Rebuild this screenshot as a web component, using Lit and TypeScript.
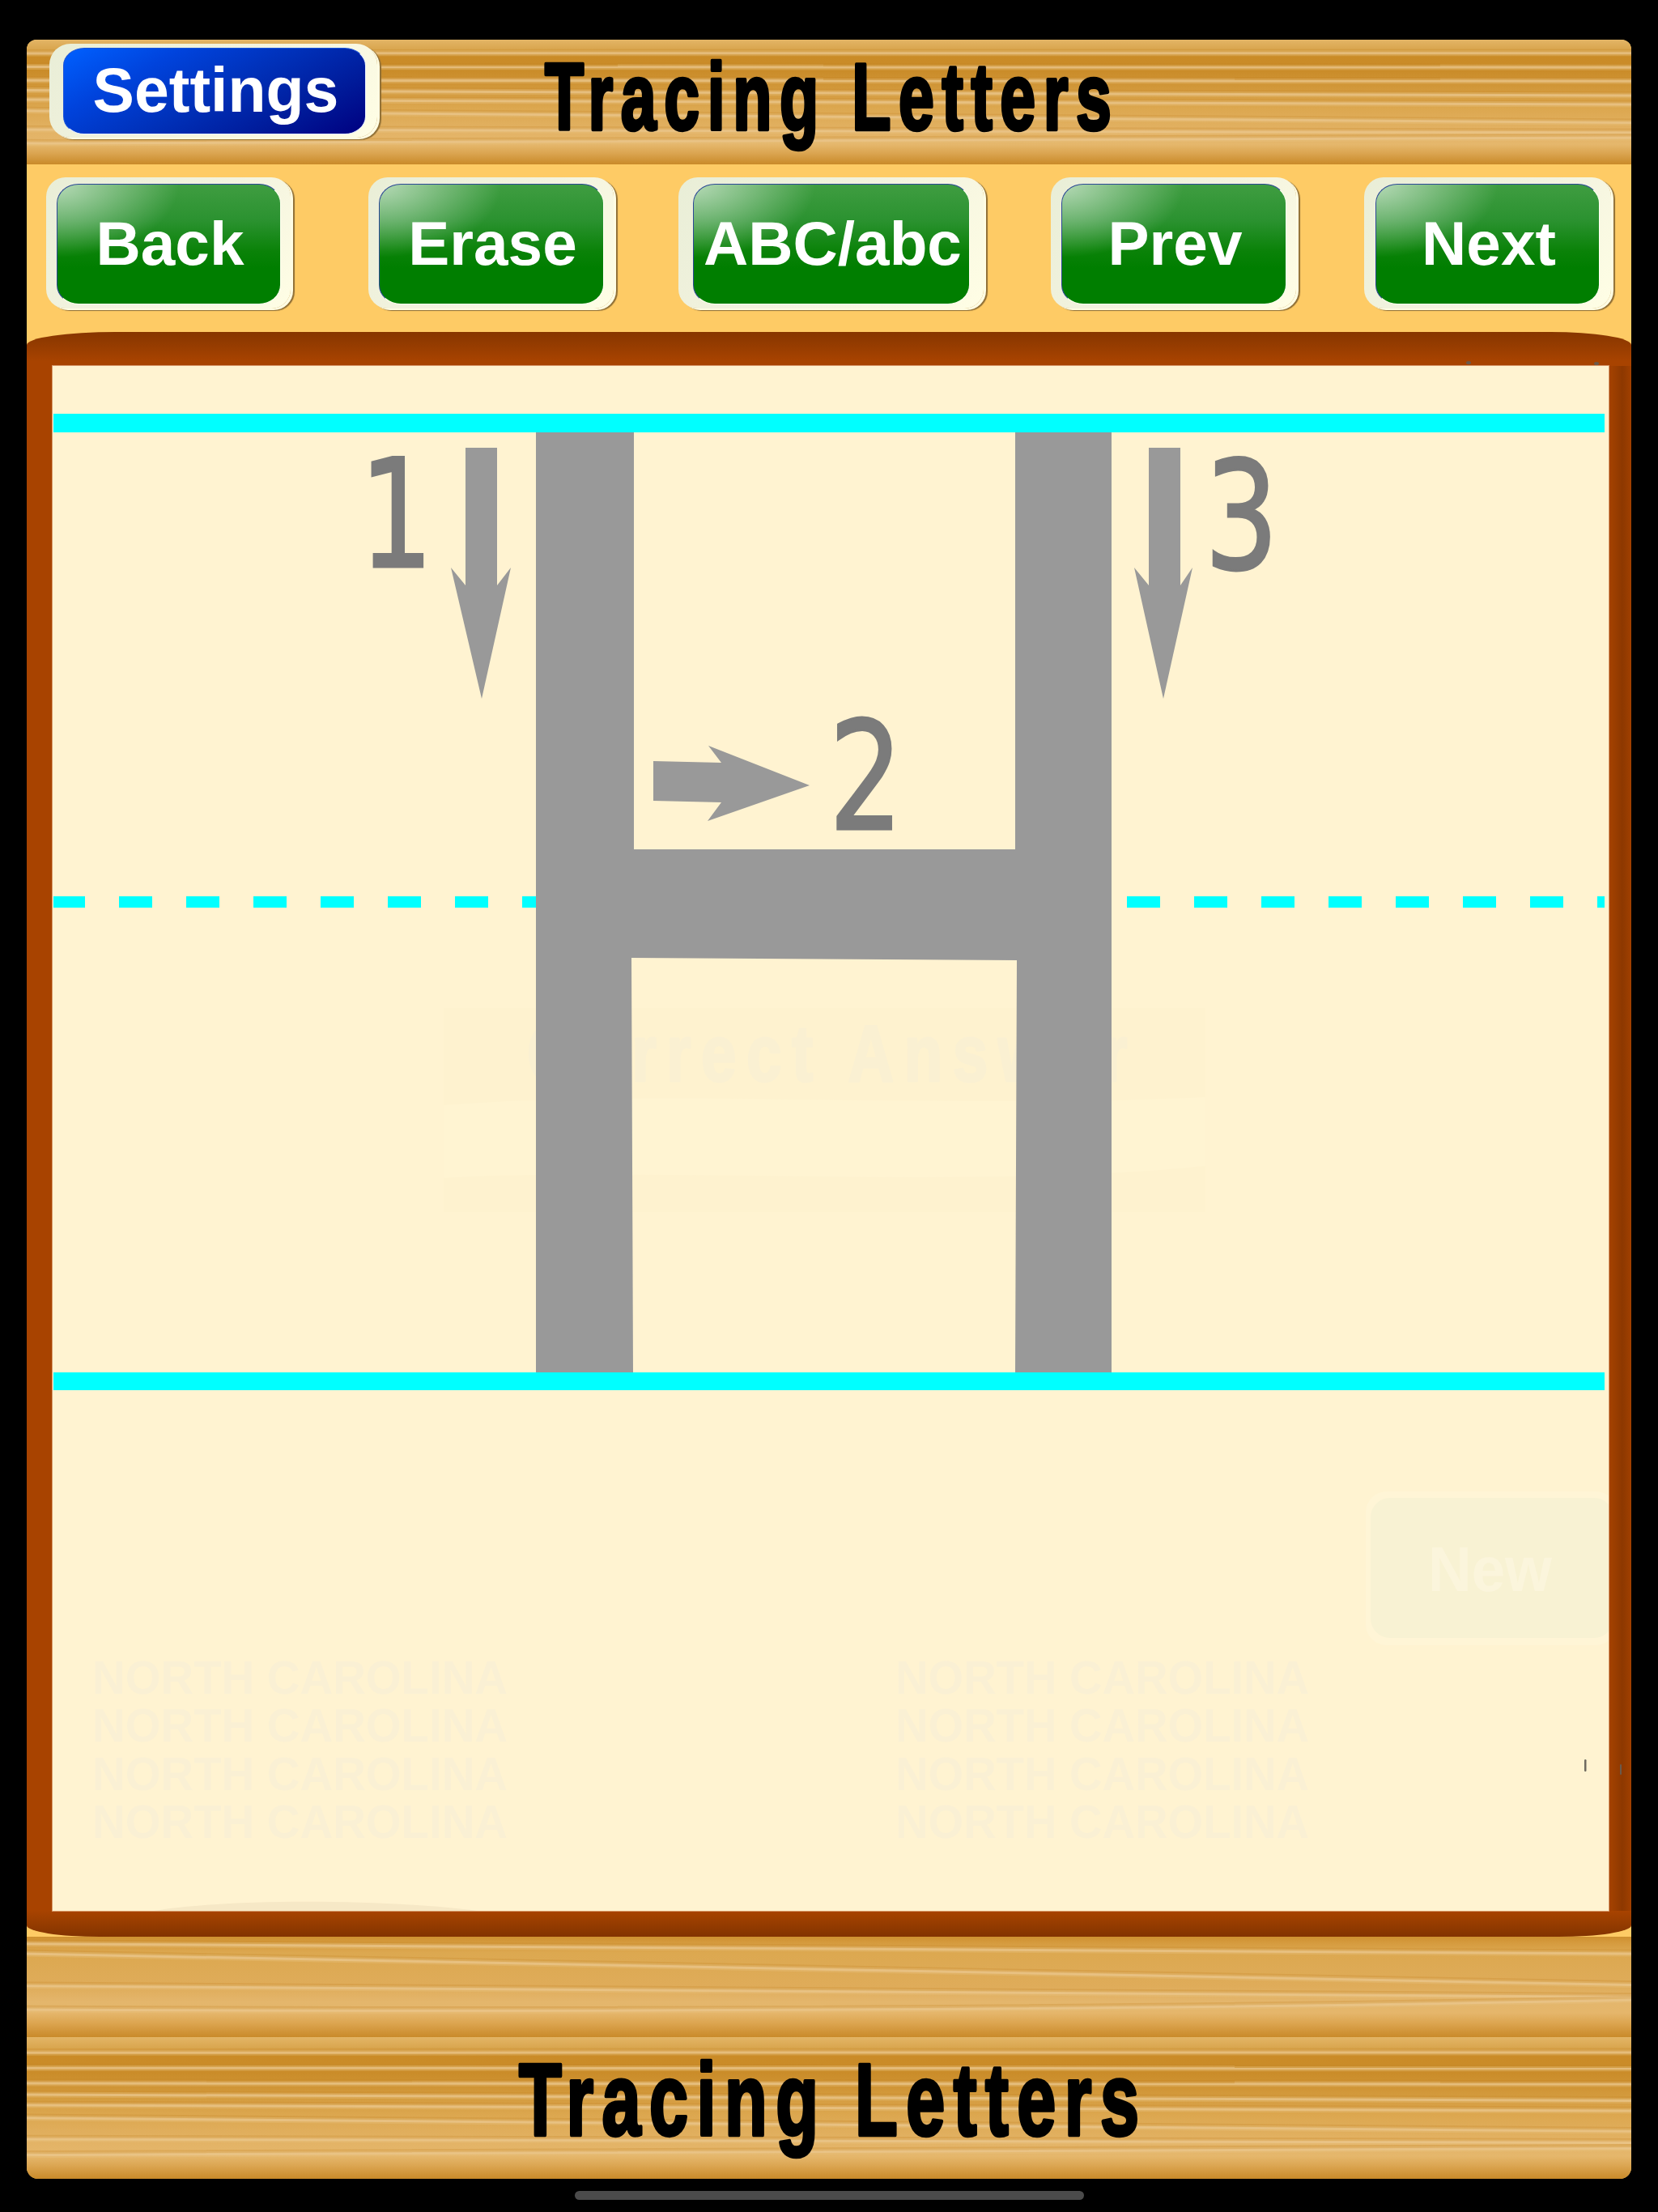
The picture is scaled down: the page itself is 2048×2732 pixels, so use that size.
import { LitElement, html, css, svg } from "lit";
import { customElement } from "lit/decorators.js";

type Grain = [number, number, number, number];

const GRAIN_A: Grain[] = [
  [110, 110, 110, 108],
  [218, 220, 222, 222],
  [326, 330, 335, 332],
  [406, 420, 440, 448],
  [480, 495, 510, 520],
  [570, 610, 640, 665],
  [720, 730, 740, 745],
  [830, 850, 835, 785],
];
const GRAIN_B: Grain[] = [
  [70, 90, 120, 170],
  [170, 280, 390, 480],
  [490, 510, 540, 600],
  [725, 750, 740, 630],
];

const STOPS_A: [number, string][] = [
  [0, "#e3b566"], [0.085, "#d8a44c"], [0.115, "#ca8b27"], [0.25, "#ca8c29"], [0.36, "#d09536"],
  [0.55, "#dca74f"], [0.75, "#e3b366"], [0.84, "#e5b76c"], [0.91, "#dba551"], [1, "#c98a29"],
];
const STOPS_B: [number, string][] = [
  [0, "#cf9130"], [0.07, "#d69c40"], [0.16, "#dca850"], [0.5, "#dfac5a"], [0.65, "#e4b66c"],
  [0.76, "#e5b66b"], [0.86, "#dca550"], [1, "#c98a2a"],
];

const grainPath = (g: Grain) => `M0 ${g[0]} C660 ${g[1]} 1320 ${g[2]} 1982 ${g[3]}`;

const wood = (id: string, stops: [number, string][], grain: Grain[], lift: number) => html`
  <svg class="wood" viewBox="0 0 1982 1000" preserveAspectRatio="none" aria-hidden="true">
    <defs>
      <linearGradient id=${id} x1="0" y1="0" x2="0" y2="1">
        ${stops.map((s) => svg`<stop offset=${s[0]} stop-color=${s[1]}></stop>`)}
      </linearGradient>
    </defs>
    <rect width="1982" height="1000" fill=${`url(#${id})`}></rect>
    ${grain.map(
      (g) => svg`<path d=${grainPath(g)} transform=${`translate(0 ${-lift})`} fill="none" stroke="#c58626" stroke-opacity=".28" stroke-width="5" vector-effect="non-scaling-stroke"></path>
        <path d=${grainPath(g)} fill="none" stroke="#e9c382" stroke-opacity=".35" stroke-width="7" vector-effect="non-scaling-stroke"></path>
        <path d=${grainPath(g)} fill="none" stroke="#ebc88e" stroke-opacity=".7" stroke-width="3" vector-effect="non-scaling-stroke"></path>`
    )}
  </svg>
`;

const TITLE = "Tracing Letters";

const northLines = [2092, 2151, 2211, 2270];

@customElement("app-root")
export class AppRoot extends LitElement {
  static styles = css`
    :host {
      display: block;
      width: 2048px;
      height: 2732px;
      background: #000;
      overflow: hidden;
      font-family: "Liberation Sans", Arial, sans-serif;
    }
    .screen {
      display: flex;
      flex-direction: column;
      align-items: center;
      padding-top: 49px;
    }
    .app {
      width: 1982px;
      border-radius: 12px 12px 14px 14px;
      overflow: hidden;
      display: flex;
      flex-direction: column;
      background: #fecb65;
    }
    .plank {
      display: grid;
    }
    .plank > * {
      grid-area: 1 / 1;
      min-width: 0;
    }
    .wood {
      display: block;
      width: 100%;
      height: 100%;
    }
    .p-top { height: 154px; }
    .p-mid { height: 124px; }
    .p-bot { height: 175px; }

    .head {
      display: flex;
      align-items: flex-start;
      padding: 5px 0 0 28px;
    }
    .title {
      display: block;
      overflow: visible;
    }
    .title text {
      font-family: "Liberation Sans", Arial, sans-serif;
      font-weight: 700;
      fill: #000;
      stroke: #000;
      stroke-linejoin: round;
      stroke-linecap: round;
    }
    .head .title {
      margin: -5px 0 0 207px;
    }
    .foot {
      display: flex;
      justify-content: center;
      padding-left: 3px;
    }

    .toolbar {
      height: 207px;
      box-sizing: border-box;
      background: #fecb65;
      display: flex;
      align-items: flex-start;
      padding: 16px 0 0 24px;
    }
    .btn {
      box-sizing: border-box;
      display: flex;
      height: 162px;
      padding: 8px 12px 5px 13px;
      border-radius: 24px;
      background: linear-gradient(135deg, #e9eed7 0%, #f3f3df 50%, #fffee5 100%);
      box-shadow: 3px 2px 0 #fffde4, 5px 3px 1px #8f6f36;
    }
    .face {
      flex: 1;
      box-sizing: border-box;
      display: flex;
      align-items: center;
      justify-content: center;
      border-radius: 27px / 24px;
      color: #fff;
      font-weight: 700;
      font-size: 76.5px;
      line-height: 1;
      white-space: nowrap;
      border: 1.5px solid;
      border-color: #2b4796 #fdfff0 #fdfff0 #2b4796;
      padding-left: 3px;
      background:
        radial-gradient(ellipse 150px 90px at 0 0, rgba(255, 255, 255, 0.62), rgba(255, 255, 255, 0) 100%),
        linear-gradient(180deg, #3f9d41 0%, #2b9230 30%, #0a8208 56%, #007e00 70%, #007e00 100%);
    }
    .back { width: 302px; }
    .erase { width: 303px; margin-left: 96px; }
    .case { width: 377px; margin-left: 80px; padding-left: 18px; padding-right: 17px; }
    .prev { width: 303px; margin-left: 83px; }
    .next { width: 305px; margin-left: 84px; padding-left: 14px; padding-right: 14px; }

    .settings {
      width: 405px;
      height: 116px;
      padding: 5px 14px 4px 17px;
      border-radius: 26px;
    }
    .settings .face {
      font-size: 77px;
      border-radius: 26px / 22px;
      border-color: #1a54d8 #e8f0ff #e8f0ff #1a54d8;
      padding-bottom: 2px;
      background: linear-gradient(152deg, #0060ff 0%, #0043dc 26%, #0030b8 52%, #001b9a 76%, #000080 100%);
    }

    .frame {
      position: relative;
      height: 1982px;
      box-sizing: border-box;
      padding: 42px 28px 32px 32px;
      border-radius: 110px 100px 90px 90px / 16px 16px 14px 14px;
      background:
        linear-gradient(90deg, rgba(150, 60, 0, 0) calc(100% - 28px), #a54200 calc(100% - 27px), #8d3800 calc(100% - 11px), #a14000 100%) 0 42px / 100% calc(100% - 74px) no-repeat,
        linear-gradient(180deg, #873600 0, #933b00 14px, #a84300 36px, #a84300 calc(100% - 32px), #933b00 calc(100% - 14px), #823300 100%);
    }
    .sheet {
      display: block;
      width: 1922px;
      height: 1908px;
      background: #fff3d1;
      box-shadow: 0 0 0 1px #d8996b;
    }
    .sheet text {
      font-family: "Liberation Sans", Arial, sans-serif;
    }
    .sheet .num {
      font-family: "DejaVu Sans", sans-serif;
      font-size: 186px;
      fill: #7b7b7b;
      stroke: #7b7b7b;
      stroke-width: 3px;
    }
    .sheet .ghost {
      font-weight: 700;
      font-size: 56.5px;
      fill: #faf0d4;
    }
    .sheet .ghost-title {
      font-weight: 700;
      font-size: 98px;
      fill: #faf0d2;
      stroke: #faf0d2;
      stroke-width: 3px;
      stroke-linejoin: round;
    }
    .sheet .ghost-new {
      font-weight: 700;
      font-size: 78px;
      fill: #fbf5dc;
    }
    .speck {
      position: absolute;
      background: #6a5a4c;
      border-radius: 50%;
    }
    .sp1 { left: 1778px; top: 36px; width: 6px; height: 4px; }
    .sp2 { left: 1936px; top: 37px; width: 6px; height: 4px; }
    .sp3 { left: 1968px; top: 1769px; width: 2px; height: 13px; border-radius: 1px; }

    .home {
      width: 629px;
      height: 11px;
      margin-top: 15px;
      border-radius: 6px;
      background: #4b4b4b;
    }
  `;

  private button(cls: string, label: string) {
    return html`<div class="btn ${cls}"><div class="face">${label}</div></div>`;
  }

  private title(w: number, h: number, base: number, font: number, len: number) {
    const sx = 0.68;
    return html`<svg class="title" width=${w} height=${h} viewBox="0 0 ${w} ${h}">
      <text
        x="0"
        y=${base}
        transform="scale(${sx} 1)"
        font-size=${font}
        stroke-width="4.5"
        textLength=${len / sx}
        lengthAdjust="spacing"
      >${TITLE}</text>
    </svg>`;
  }

  private sheet() {
    return html`<svg class="sheet" viewBox="65 452 1922 1908" aria-label="Letter H tracing sheet">
      <!-- faded layers left behind the page -->
      <rect x="548" y="1245" width="941" height="252" fill="#fef2cf"></rect>
      <path d="M548 1365 C800 1345 1200 1370 1489 1355 L1489 1440 C1200 1470 800 1440 548 1455Z" fill="#fff4d2"></path>
      <text class="ghost-title" transform="translate(651 1335) scale(.8 1)" textLength="927" lengthAdjust="spacing">Correct Answer</text>

      <rect x="1687" y="1842" width="310" height="190" rx="26" fill="#fff5d6"></rect>
      <rect x="1693" y="1850" width="300" height="173" rx="24" fill="#f8f2d3"></rect>
      <text class="ghost-new" x="1764" y="1965" textLength="153" lengthAdjust="spacingAndGlyphs">New</text>

      ${northLines.map(
        (y) => svg`<text class="ghost" x="114" y=${y} textLength="513" lengthAdjust="spacingAndGlyphs">NORTH CAROLINA</text>
          <text class="ghost" x="1106" y=${y} textLength="511" lengthAdjust="spacingAndGlyphs">NORTH CAROLINA</text>`
      )}
      <path d="M190 2360 C280 2345 470 2345 590 2360Z" fill="#f6e8c6"></path>
      <rect x="1957" y="2173" width="2.5" height="15" rx="1.2" fill="#6f6a60"></rect>

      <!-- writing guides -->
      <rect x="66" y="511" width="1916" height="23" fill="#00ffff"></rect>
      <path d="M66 1114 H1982" fill="none" stroke="#00ffff" stroke-width="14" stroke-dasharray="41 42" stroke-dashoffset="2"></path>
      <rect x="66" y="1695" width="1916" height="22" fill="#00ffff"></rect>

      <!-- letter -->
      <path
        d="M662 534 H783 V1049 H1254 V534 H1373 V1695 H1254 L1256 1186 L780 1183 L782 1695 H662 Z"
        fill="#999999"
      ></path>

      <!-- stroke arrows -->
      <polygon points="575,553 614,553 614,723 631,701 595,863 557,701 575,723" fill="#999999"></polygon>
      <polygon points="807,940 891,942 875,921 1000,970 874,1014 891,991 807,989" fill="#999999"></polygon>
      <polygon points="1419,553 1458,553 1458,723 1473,701 1437,863 1401,701 1419,723" fill="#999999"></polygon>

      <!-- stroke numbers -->
      <text class="num" transform="translate(444 700) scale(.77 1)">1</text>
      <text class="num" transform="translate(1024 1024) scale(.77 1)">2</text>
      <text class="num" transform="translate(1488 702) scale(.77 1)">3</text>
    </svg>`;
  }

  render() {
    return html`
      <div class="screen">
        <div class="app">
          <header class="plank p-top">
            ${wood("woodTop", STOPS_A, GRAIN_A, 16)}
            <div class="head">
              <div class="btn settings"><div class="face">Settings</div></div>
              ${this.title(720, 154, 111, 116, 700)}
            </div>
          </header>

          <nav class="toolbar">
            ${this.button("back", "Back")} ${this.button("erase", "Erase")}
            ${this.button("case", "ABC/abc")} ${this.button("prev", "Prev")}
            ${this.button("next", "Next")}
          </nav>

          <main class="frame">
            ${this.sheet()}
            <span class="speck sp1"></span>
            <span class="speck sp2"></span>
            <span class="speck sp3"></span>
          </main>

          <div class="plank p-mid">${wood("woodMid", STOPS_B, GRAIN_B, 22)}</div>

          <footer class="plank p-bot">
            ${wood("woodBot", STOPS_A, GRAIN_A, 16)}
            <div class="foot">${this.title(770, 175, 121, 127, 766)}</div>
          </footer>
        </div>
        <div class="home"></div>
      </div>
    `;
  }
}
